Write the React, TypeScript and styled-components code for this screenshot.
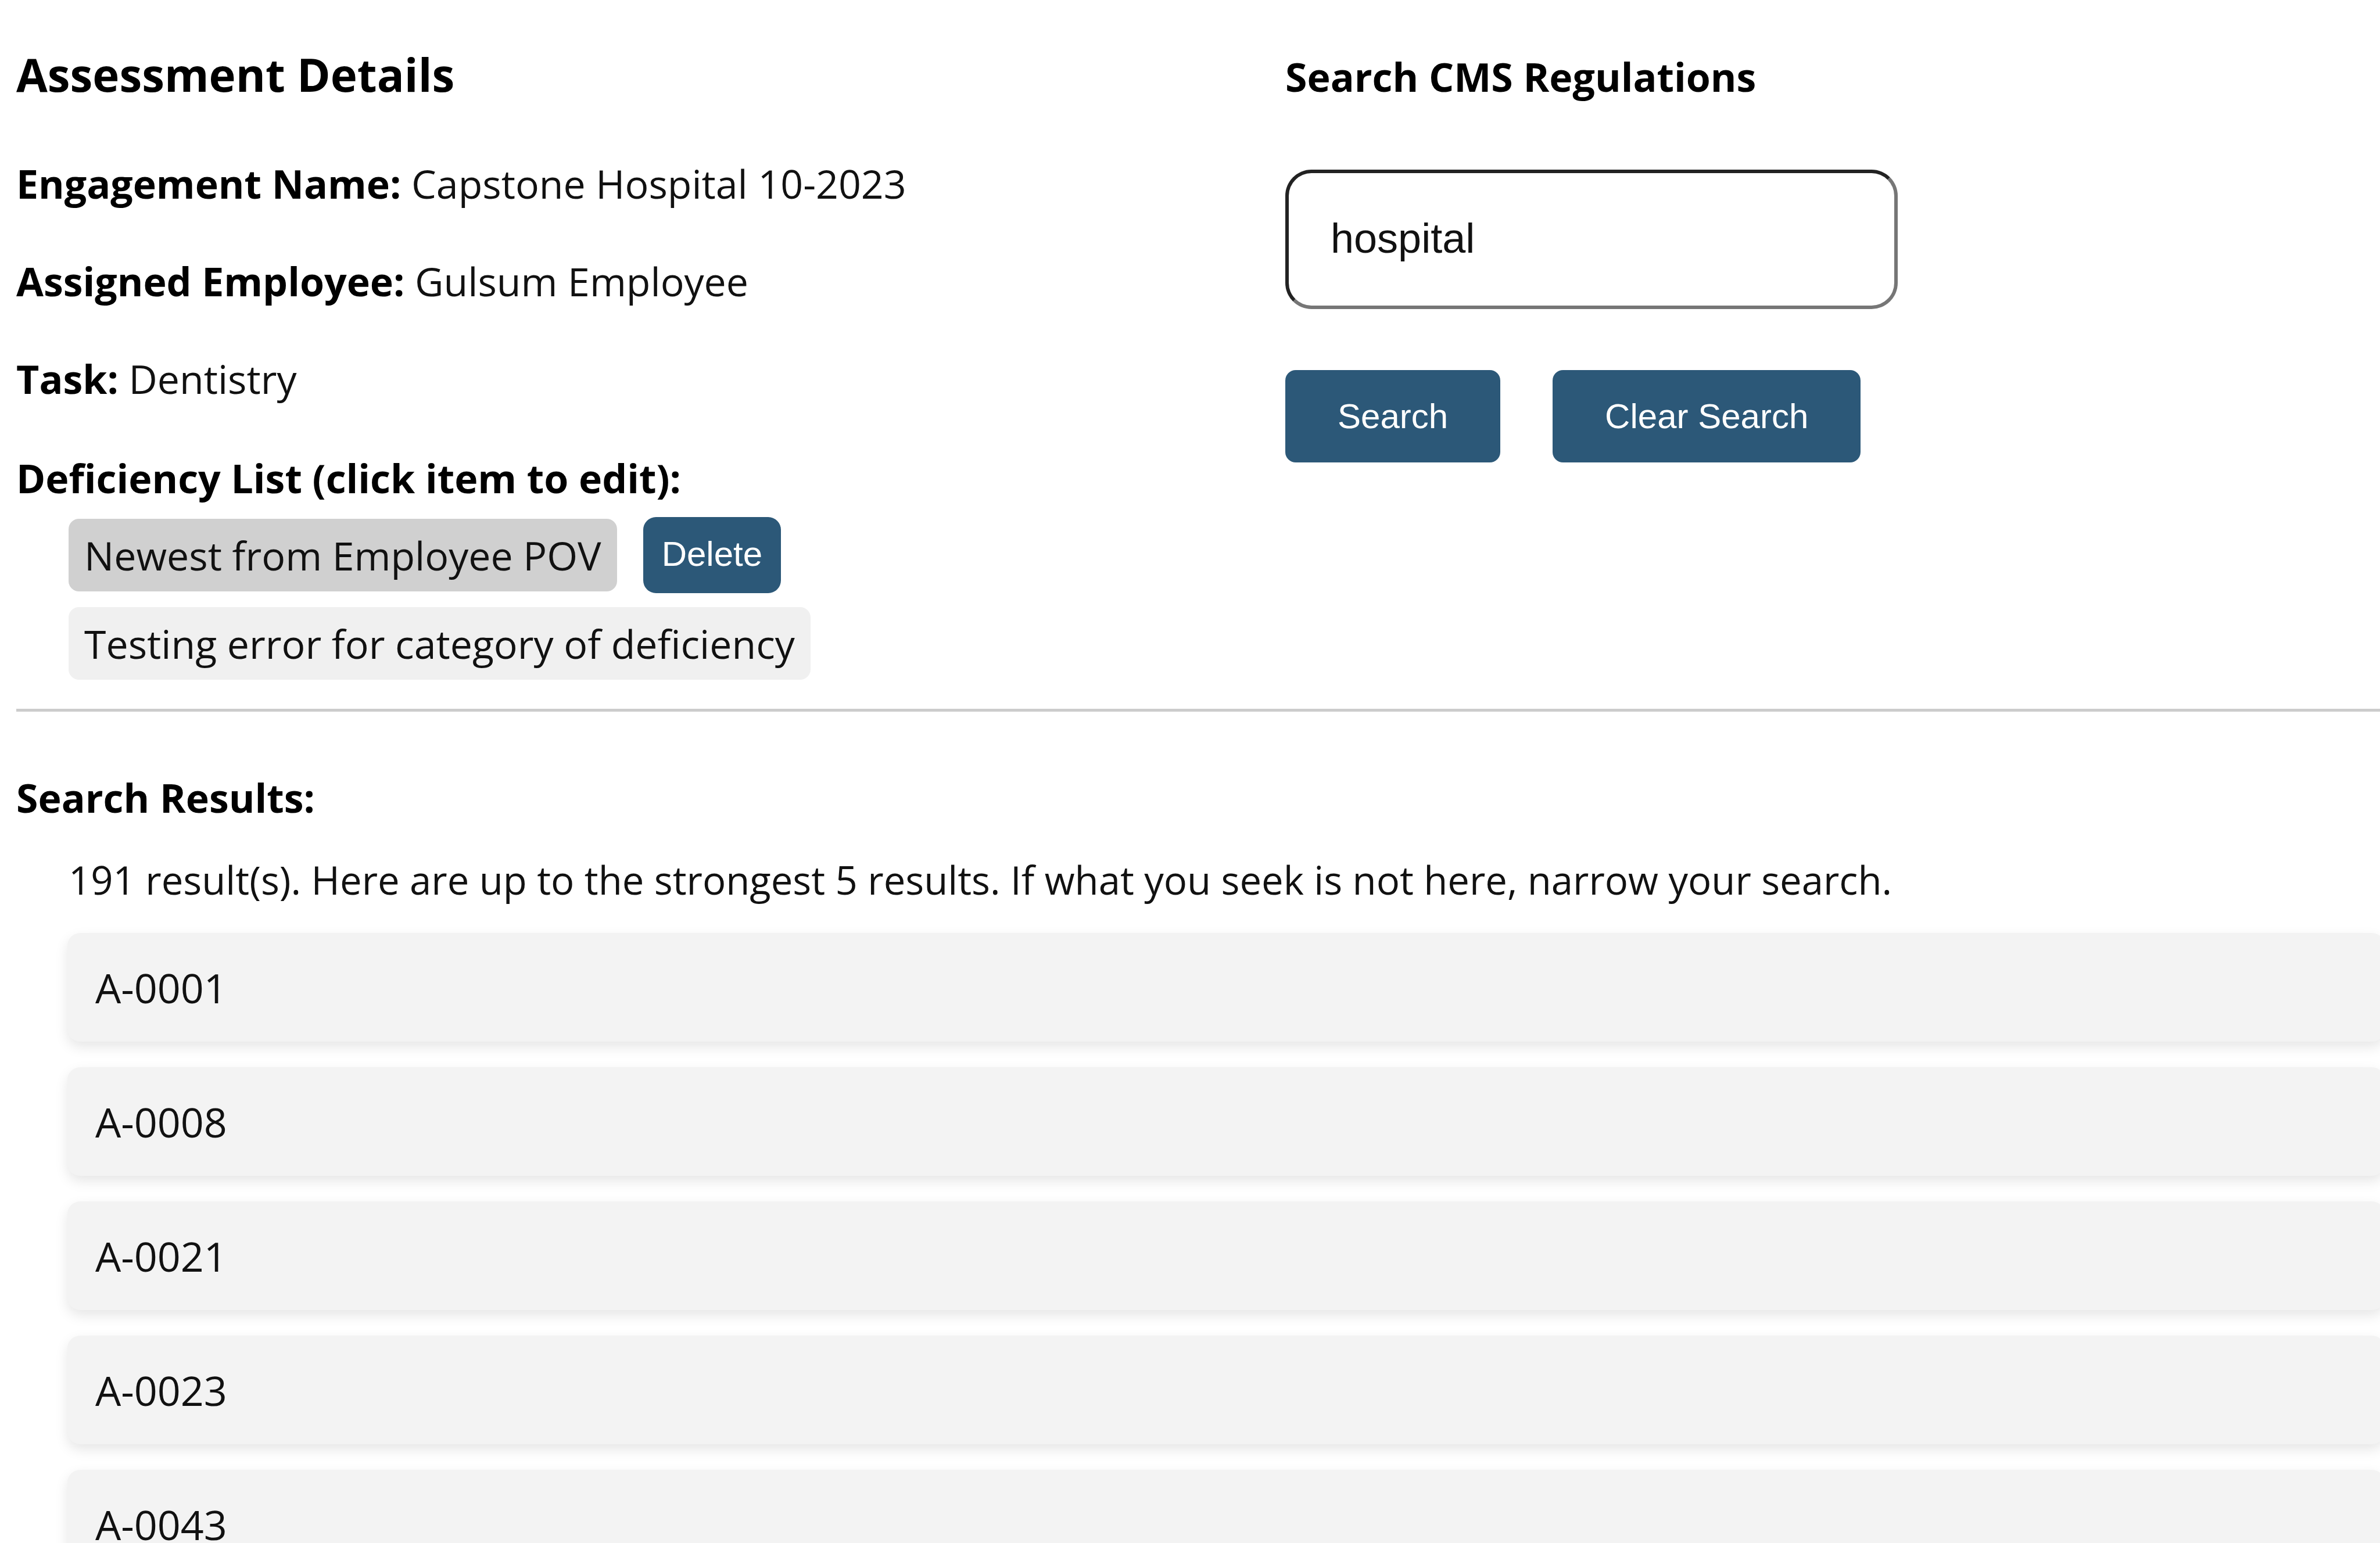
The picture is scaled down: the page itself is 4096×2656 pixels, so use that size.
import React, { useState } from "react";
import styled, { createGlobalStyle, css } from "styled-components";

const textFont = '"Open Sans", "Noto Sans", sans-serif';
const controlFont = '"Liberation Sans", Arial, sans-serif';

const GlobalStyle = createGlobalStyle`
  *, *::before, *::after { box-sizing: border-box; }
  html { scrollbar-width: none; }
  body {
    margin: 0;
    background: #fff;
    color: #000;
    font-family: ${textFont};
    font-size: 68px;
    line-height: 96px;
    overflow-x: hidden;
  }
`;

const Page = styled.main`
  padding: 71px 0 71px 28px;
`;

const TopSection = styled.section`
  display: grid;
  grid-template-columns: 1fr 1fr;
  padding-bottom: 50px;
  border-bottom: 5px solid #ccc;
`;

const Details = styled.div`
  display: flex;
  flex-direction: column;
`;

const Title = styled.h3`
  margin: 0 0 83px;
  font-size: 78px;
  line-height: 114px;
`;

const subtitleText = css`
  margin: 0;
  font-size: 68px;
  font-weight: 700;
  line-height: 96px;
`;

const Subtitle = styled.h4`
  ${subtitleText}
`;

const SearchLabel = styled.label`
  ${subtitleText}
`;

const DetailGroup = styled.div`
  display: flex;
  flex-direction: column;
  gap: 72px;
  padding-bottom: 75px;
`;

const Detail = styled.p`
  margin: 0;
  color: #111;

  strong {
    color: #000;
  }
`;

const DeficiencyList = styled.ul`
  display: flex;
  flex-direction: column;
  gap: 24px;
  margin: 19px 0 0;
  padding: 0 0 0 90px;
  list-style: none;
`;

const DeficiencyRow = styled.li`
  display: flex;
  align-items: center;
  gap: 45px;
`;

const DeficiencyItem = styled.button<{ $selected: boolean }>`
  padding: 15px 27px 14px;
  border: 0;
  border-radius: 18px;
  background: ${(p) => (p.$selected ? "#d0d0d0" : "#f0f0f0")};
  color: #111;
  font: inherit;
  white-space: nowrap;
  cursor: pointer;
`;

const Button = styled.button<{ $compact?: boolean }>`
  height: ${(p) => (p.$compact ? 131 : 159)}px;
  padding: ${(p) => (p.$compact ? "0 32px 4px" : "0 90px")};
  border: 0;
  border-radius: ${(p) => (p.$compact ? 22 : 18)}px;
  background: #2c5878;
  color: #fff;
  font-family: ${controlFont};
  font-size: 60px;
  line-height: 72px;
  cursor: pointer;
`;

const SearchForm = styled.form`
  display: flex;
  flex-direction: column;
  align-items: flex-start;
  padding: 13px 0 0 150px;
`;

const SearchInput = styled.input`
  width: 1054px;
  height: 240px;
  margin: 112px 0 105px;
  padding: 0 72px 4px;
  border: 6px solid;
  border-color: #222 #767676 #767676 #222;
  border-radius: 45px;
  background: #fff;
  color: #111;
  font-family: ${controlFont};
  font-size: 72px;
  outline: none;
`;

const ButtonRow = styled.div`
  display: flex;
  gap: 90px;
`;

const Results = styled.section`
  padding-top: 100px;
`;

const Summary = styled.p`
  margin: 45px 0 44px;
  padding-left: 90px;
  color: #111;
  font-size: 67px;
`;

const ResultList = styled.ul`
  display: flex;
  flex-direction: column;
  gap: 44px;
  margin: 0 -8px 0 0;
  padding: 0 0 0 88px;
  list-style: none;
`;

const ResultCard = styled.button`
  display: block;
  width: 100%;
  padding: 46px 48px 45px;
  border: 0;
  border-radius: 22px;
  background: #f3f3f3;
  box-shadow: 0 9px 22px rgba(0, 0, 0, 0.1);
  color: #111;
  font-family: inherit;
  font-size: 70px;
  line-height: 96px;
  text-align: left;
  cursor: pointer;
`;

const deficiencies = [
  "Newest from Employee POV",
  "Testing error for category of deficiency",
];

const results = ["A-0001", "A-0008", "A-0021", "A-0023", "A-0043"];

export default function App() {
  const [query, setQuery] = useState("hospital");
  const [selected, setSelected] = useState(0);

  return (
    <>
      <GlobalStyle />
      <Page>
        <TopSection>
          <Details>
            <Title>Assessment Details</Title>
            <DetailGroup>
              <Detail>
                <strong>Engagement Name:</strong> Capstone Hospital 10-2023
              </Detail>
              <Detail>
                <strong>Assigned Employee:</strong> Gulsum Employee
              </Detail>
              <Detail>
                <strong>Task:</strong> Dentistry
              </Detail>
            </DetailGroup>
            <Subtitle>Deficiency List (click item to edit):</Subtitle>
            <DeficiencyList>
              {deficiencies.map((name, i) => (
                <DeficiencyRow key={name}>
                  <DeficiencyItem
                    type="button"
                    $selected={i === selected}
                    onClick={() => setSelected(i)}
                  >
                    {name}
                  </DeficiencyItem>
                  {i === selected && (
                    <Button type="button" $compact>
                      Delete
                    </Button>
                  )}
                </DeficiencyRow>
              ))}
            </DeficiencyList>
          </Details>
          <SearchForm onSubmit={(e) => e.preventDefault()}>
            <SearchLabel htmlFor="regulation-search">
              Search CMS Regulations
            </SearchLabel>
            <SearchInput
              id="regulation-search"
              type="text"
              value={query}
              onChange={(e) => setQuery(e.target.value)}
            />
            <ButtonRow>
              <Button type="submit">Search</Button>
              <Button type="button" onClick={() => setQuery("")}>
                Clear Search
              </Button>
            </ButtonRow>
          </SearchForm>
        </TopSection>
        <Results>
          <Subtitle>Search Results:</Subtitle>
          <Summary>
            191 result(s). Here are up to the strongest 5 results. If what you
            seek is not here, narrow your search.
          </Summary>
          <ResultList>
            {results.map((tag) => (
              <li key={tag}>
                <ResultCard type="button">{tag}</ResultCard>
              </li>
            ))}
          </ResultList>
        </Results>
      </Page>
    </>
  );
}
